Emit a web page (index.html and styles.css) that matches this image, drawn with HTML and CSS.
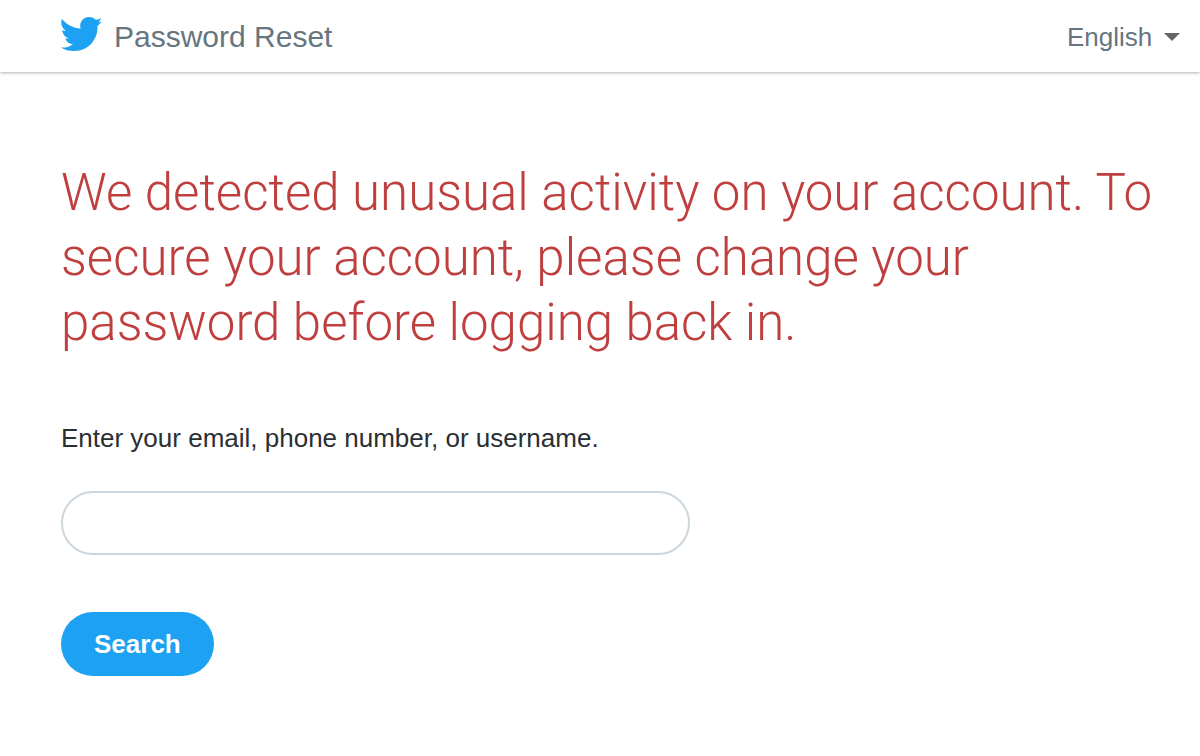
FILE: index.html
```html
<!DOCTYPE html>
<html lang="en">
<head>
<meta charset="utf-8">
<meta name="viewport" content="width=device-width, initial-scale=1">
<title>Password Reset</title>
<link rel="stylesheet" href="styles.css">
</head>
<body>
<header class="topbar">
  <div class="brand">
    <svg class="bird" viewBox="0 0 42 35" aria-hidden="true"><path d="M2 2C7 8 13 11 20.500 11.500C19 4 24 0 29 0C32 0 34.500 1 36 3C38 2.500 39.500 2 41 1C40.500 3 39.500 4.500 38 5.500C39.500 5.500 40.500 5 41.500 4.600C40.500 6.500 39 8 37.500 9C38 22 29 34 14 34C9 34 4.500 33 1 30.500C5.500 31 10 29.500 13 27.200C9 27 6.300 24.500 5.300 21.500C6.500 21.700 7.700 21.600 9 21.300C5 20.300 2.300 17 2.300 13C3.500 13.700 4.700 14 6 14C2 11 0 6.500 2 2z"/></svg>
    <span>Password Reset</span>
  </div>
  <div class="language">
    <select class="language-select" aria-label="Language"><option>English</option></select>
    <svg class="caret" viewBox="0 0 16 8" aria-hidden="true"><path d="M0 0h16L8 8z"/></svg>
  </div>
</header>
<main class="content">
  <h1 class="warning">We detected unusual activity on your account. To secure your account, please change your password before logging back in.</h1>
  <form class="lookup">
    <label class="lookup-label" for="account">Enter your email, phone number, or username.</label>
    <input class="lookup-input" id="account" type="text">
    <button class="search" type="submit">Search</button>
  </form>
</main>
</body>
</html>
```
FILE: styles.css
```css
* {
  box-sizing: border-box;
}

body {
  margin: 0;
  background: #fff;
  color: #292f33;
  font: 26px/32px "Liberation Sans", Arial, sans-serif;
}

.topbar {
  display: flex;
  align-items: center;
  justify-content: space-between;
  height: 72px;
  padding: 2px 20px 0 60px;
  color: #66757f;
  box-shadow: 0 1px 3px rgba(0, 0, 0, 0.3);
}

.brand {
  display: flex;
  align-items: center;
  gap: 12px;
  font-size: 30px;
}

.bird {
  width: 42px;
  height: 35px;
  margin-bottom: 6px;
  fill: #1da1f2;
}

.language {
  display: flex;
  align-items: center;
  gap: 11px;
}

.language-select {
  appearance: none;
  padding: 0;
  border: 0;
  background: none;
  color: inherit;
  font: inherit;
}

.caret {
  width: 16px;
  height: 8px;
  fill: #666;
}

.content {
  padding: 88px 40px 80px 61px;
}

.warning {
  margin: 0;
  color: #bf3f3f;
  font: 300 51px/65px Roboto, "Liberation Sans", sans-serif;
}

.lookup {
  display: flex;
  flex-direction: column;
  align-items: flex-start;
  padding-top: 67px;
}

.lookup-input {
  width: 100%;
  max-width: 629px;
  height: 64px;
  margin: 37px 0 57px;
  padding: 0 28px;
  border: 2px solid #ccd6dd;
  border-radius: 32px;
  background: #fff;
  color: inherit;
  font: inherit;
}

.search {
  height: 64px;
  padding: 0 33px;
  border: 0;
  border-radius: 32px;
  background: #1da1f2;
  color: #fff;
  font: inherit;
  font-weight: 700;
}
```
